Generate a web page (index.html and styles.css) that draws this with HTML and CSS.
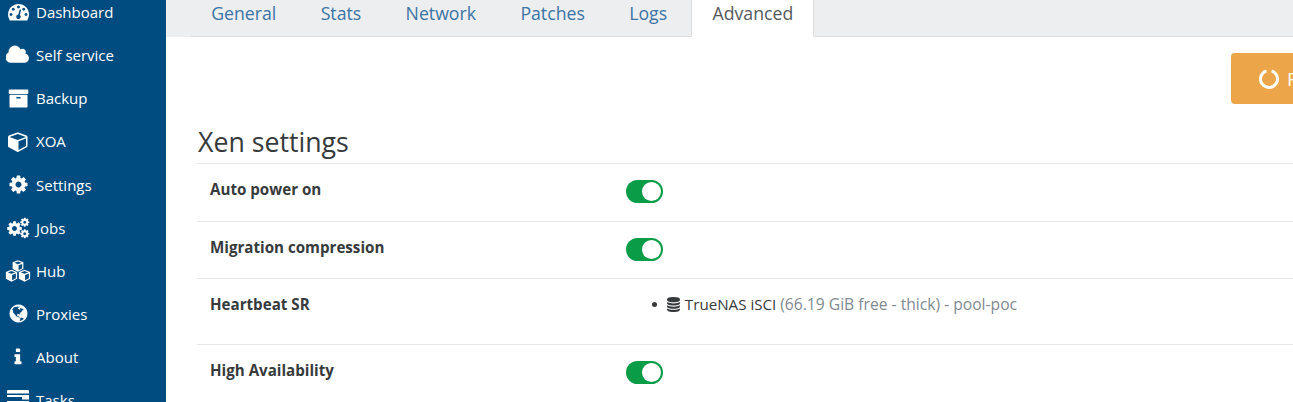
FILE: index.html
```html
<!doctype html>
<html lang="en">
    <head>
        <meta charset="UTF-8" />
        <title>Xen Orchestra - Advanced</title>
        <link rel="stylesheet" href="styles.css">
    </head>
    <body>
        <svg class="sprites" width="0" height="0">
            <symbol id="i-cog" viewBox="0 0 1792 1792"><path d="M1152 896q0-106-75-181t-181-75-181 75-75 181 75 181 181 75 181-75 75-181zm512-109v222q0 12-8 23t-20 13l-185 28q-19 54-39 91 35 50 107 138 10 12 10 25t-9 23q-27 37-99 108t-94 71q-12 0-26-9l-138-108q-44 23-91 38-16 136-29 186-7 28-36 28h-222q-14 0-24.5-8.5t-11.5-21.5l-28-184q-49-16-90-37l-141 107q-10 9-25 9-14 0-25-11-126-114-165-168-7-10-7-23 0-12 8-23 15-21 51-66.5t54-70.5q-27-50-41-99l-183-27q-13-2-21-12.5t-8-23.5v-222q0-12 8-23t19-13l186-28q14-46 39-92-40-57-107-138-10-12-10-24 0-10 9-23 26-36 98.5-107.5t94.5-71.5q13 0 26 10l138 107q44-23 91-38 16-136 29-186 7-28 36-28h222q14 0 24.5 8.5t11.5 21.5l28 184q49 16 90 37l142-107q9-9 24-9 13 0 25 10 129 119 165 170 7 8 7 22 0 12-8 23-15 21-51 66.5t-54 70.5q26 50 41 98l183 28q13 2 21 12.5t8 23.5z"/></symbol>
            <symbol id="i-cube" viewBox="0 0 1792 1792"><path d="M896 1629l640-349v-636l-640 233v752zm-64-865l698-254-698-254-698 254zm832-252v768q0 35-18 65t-49 47l-704 384q-28 16-61 16t-61-16l-704-384q-31-17-49-47t-18-65v-768q0-40 23-73t61-47l704-256q22-8 44-8t44 8l704 256q38 14 61 47t23 73z"/></symbol>
            <symbol id="i-block" viewBox="0 0 20 20"><path d="M10 .5l9 3.300v10.900L10 19.500 1 14.700V3.800zM10 2.500L4 4.700l6 2.200 6-2.200zM11 8.700v8.500l6-3.300V6.500z" fill-rule="evenodd"/></symbol>
        </svg>

        <nav class="sidebar">
            <a class="nav-item"><span class="nav-icon"><svg width="21" height="21" viewBox="0 0 1792 1792"><path d="M384 1152q0-53-37.5-90.5t-90.5-37.5-90.5 37.5-37.5 90.5 37.5 90.5 90.5 37.5 90.5-37.5 37.5-90.5zm192-448q0-53-37.5-90.5t-90.5-37.5-90.5 37.5-37.5 90.5 37.5 90.5 90.5 37.5 90.5-37.5 37.5-90.5zm428 481l101-382q6-26-7.5-48.5t-38.5-29.5-48 6.5-30 39.5l-101 382q-60 5-107 43.5t-63 98.5q-20 77 20 146t117 89 146-20 89-117q16-60-6-117t-72-91zm660-33q0-53-37.5-90.5t-90.5-37.5-90.5 37.5-37.5 90.5 37.5 90.5 90.5 37.5 90.5-37.5 37.5-90.5zm-640-640q0-53-37.5-90.5t-90.5-37.5-90.5 37.5-37.5 90.5 37.5 90.5 90.5 37.5 90.5-37.5 37.5-90.5zm448 192q0-53-37.5-90.5t-90.5-37.5-90.5 37.5-37.5 90.5 37.5 90.5 90.5 37.5 90.5-37.5 37.5-90.5zm320 448q0 261-141 483-19 29-54 29h-1402q-35 0-54-29-141-221-141-483 0-182 71-348t191-286 286-191 348-71 348 71 286 191 191 286 71 348z"/></svg></span>Dashboard</a>
            <a class="nav-item"><span class="nav-icon"><svg width="24" height="22" viewBox="0 0 1920 1792"><path d="M1856 1152q0 159-112.5 271.5t-271.5 112.5h-1088q-185 0-316.5-131.5t-131.5-316.5q0-132 71-241.5t187-163.5q-2-28-2-43 0-212 150-362t362-150q158 0 286.5 88t187.5 230q70-62 166-62 106 0 181 75t75 181q0 75-41 138 129 30 213 134.5t84 239.5z"/></svg></span>Self service</a>
            <a class="nav-item"><span class="nav-icon"><svg width="21" height="21" viewBox="0 0 1792 1792"><path d="M1088 832q0-26-19-45t-45-19h-256q-26 0-45 19t-19 45 19 45 45 19h256q26 0 45-19t19-45zm576-192v960q0 26-19 45t-45 19h-1408q-26 0-45-19t-19-45v-960q0-26 19-45t45-19h1408q26 0 45 19t19 45zm64-448v256q0 26-19 45t-45 19h-1536q-26 0-45-19t-19-45v-256q0-26 19-45t45-19h1536q26 0 45 19t19 45z"/></svg></span>Backup</a>
            <a class="nav-item"><span class="nav-icon"><svg width="21" height="21"><use href="#i-cube"/></svg></span>XOA</a>
            <a class="nav-item"><span class="nav-icon"><svg width="21" height="21"><use href="#i-cog"/></svg></span>Settings</a>
            <a class="nav-item"><span class="nav-icon"><svg width="24" height="22" viewBox="0 0 24 22"><use href="#i-cog" x="0" y="3" width="17" height="17"/><use href="#i-cog" x="13.500" y="0" width="10.500" height="10.500"/><use href="#i-cog" x="13.500" y="11.500" width="10.500" height="10.500"/></svg></span>Jobs</a>
            <a class="nav-item"><span class="nav-icon"><svg width="26" height="22" viewBox="0 0 26 22"><use href="#i-block" x="6.500" y="0" width="13" height="12"/><use href="#i-block" x="0" y="9.500" width="13" height="12.500"/><use href="#i-block" x="13" y="9.500" width="13" height="12.500"/></svg></span>Hub</a>
            <a class="nav-item"><span class="nav-icon"><svg width="21" height="21" viewBox="0 0 1792 1792"><path d="M896 128q209 0 385.5 103t279.5 279.5 103 385.5-103 385.5-279.5 279.5-385.5 103-385.5-103-279.5-279.5-103-385.5 103-385.5 279.5-279.5 385.5-103zm274 521q-2 1-9.5 9.5t-13.5 9.5q2 0 4.500-5t5-11 3.500-7q6-7 22-15 14-6 52-12 34-8 51 11-2-2 9.500-13t14.500-12q3-2 15-4.500t15-7.500l2-22q-12 1-17.500-7t-6.500-21q0 2-6 8 0-7-4.500-8t-11.500 1-9 1q-10-3-15-7.500t-8-16.500-4-15q-2-5-9.500-11t-9.500-10q-1-2-2.500-5.500t-3-6.500-4-5.500-5.500-2.500-7 5-7.500 10-4.500 5q-3-2-6-1.500t-4.500 1-4.500 3-5 3.500q-3 2-8.500 3t-8.500 2q15-5-1-11-10-4-16-3 9-4 7.500-12t-8.500-14h5q-1-4-8.500-8.500t-17.500-8.500-13-6q-8-5-34-9.500t-33-.5q-5 6-4.500 10.500t4 14 3.500 12.500q1 6-5.500 13t-6.500 12q0 7 14 15.500t10 21.500q-3 8-16 16t-16 12q-5 8-1.500 18.500t10.500 16.500q2 2 1.500 4t-3.500 4.500-5.500 4-6.500 3.500l-3 2q-11 5-20.500-6t-13.500-26q-7-25-16-30-23-8-29 1-5-13-41-26-25-9-58-4 6-1 0-15-7-15-19-12 3-6 4-17.500t1-13.500q3-13 12-23 1-1 7-8.500t9.500-13.500.5-6q35 4 50-11 5-5 11.500-17t10.500-17q9-6 14-5.500t14.500 5.500 14.500 5q14 1 15.500-11t-7.500-20q12 1 3-17-4-7-8-9-12-4-27 5-8 4 2 8-1-1-9.500 10.500t-16.500 17.500-16-5q-1-1-5.500-13.500t-9.500-13.500q-8 0-16 15 3-8-11-15t-24-8q19-12-8-27-7-4-20.500-5t-19.500 4q-5 7-5.500 11.500t5 8 10.500 5.500 11.500 4 8.500 3q14 10 8 14-2 1-8.500 3.500t-11.500 4.500-6 4q-3 4 0 14t-2 14q-5-5-9-17.500t-7-16.500q7 9-25 6l-10-1q-4 0-16 2t-20.500 1-13.500-8q-4-8 0-20 1-4 4-2-4-3-11-9.500t-10-8.500q-46 15-94 41 6 1 12-1 5-2 13-6.500t10-5.500q34-14 42-7l5-5q14 16 20 25-7-4-30-1-20 6-22 12 7 12 5 18-4-3-11.500-10t-14.500-11-15-5q-16 0-22 1-146 80-235 222 7 7 12 8 4 1 5 9t2.500 11 11.500-3q9 8 3 19 1-1 44 27 19 17 21 21 3 11-10 18-1-2-9-9t-9-4q-3 5 .5 18.500t10.500 12.500q-7 0-9.500 16t-2.500 35.500-1 23.500l2 1q-3 12 5.500 34.500t21.500 19.500q-13 3 20 43 6 8 8 9 3 2 12 7.500t15 10 10 10.500q4 5 10 22.500t14 23.500q-2 6 9.500 20t10.500 23q-1 0-2.500 1t-2.500 1q3 7 15.500 14t15.500 13q1 3 2 10t3 11 8 2q2-20-24-62-15-25-17-29-3-5-5.500-15.500t-4.500-14.500q2 0 6 1.500t8.500 3.500 7.500 4 2 3q-3 7 2 17.500t12 18.500 17 19 12 13q6 6 14 19.500t0 13.500q9 0 20 10.500t17 19.500q5 8 8 26t5 24q2 7 8.500 13.500t12.500 9.500l16 8 13 7q5 2 18.500 10.500t21.500 11.500q10 4 16 4t14.500-2.500 13.500-3.500q15-2 29 15t21 21q36 19 55 11-2 1 .5 7.500t8 15.500 9 14.500 5.500 8.500q5 6 18 15t18 15q6-4 7-9-3 8 7 20t18 10q14-3 14-32-31 15-49-18 0-1-2.500-5.500t-4-8.500-2.500-8.500 0-7.500 5-3q9 0 10-3.500t-2-12.500-4-13q-1-8-11-20t-12-15q-5 9-16 8t-16-9q0 1-1.500 5.500t-1.500 6.500q-13 0-15-1 1-3 2.500-17.500t3.500-22.500q1-4 5.500-12t7.500-14.500 4-12.500-4.500-9.500-17.500-2.500q-19 1-26 20-1 3-3 10.500t-5 11.500-9 7q-7 3-24 2t-24-5q-13-8-22.500-29t-9.500-37q0-10 2.500-26.500t3-25-5.500-24.500q3-2 9-9.500t10-10.500q2-1 4.500-1.500t4.500 0 4-1.500 3-6q-1-1-4-3-3-3-4-3 7 3 28.500-1.500t27.500 1.500q15 11 22-2 0-1-2.500-9.500t-.5-13.500q5 27 29 9 3 3 15.500 5t17.500 5q3 2 7 5.500t5.500 4.500 5-.5 8.500-6.500q10 14 12 24 11 40 19 44 7 3 11 2t4.500-9.500 0-14-1.500-12.500l-1-8v-18l-1-8q-15-3-18.500-12t1.500-18.500 15-18.500q1-1 8-3.500t15.500-6.500 12.500-8q21-19 15-35 7 0 11-9-1 0-5-3t-7.500-5-4.500-2q9-5 2-16 5-3 7.500-11t7.500-10q9 12 21 2 8-8 1-16 5-7 20.500-10.500t18.500-9.500q7 2 8-2t1-12 3-12q4-5 15-9t13-5l17-11q3-4 0-4 18 2 31-11 10-11-6-20 3-6-3-9.500t-15-5.500q3-1 11.500-.5t10.500-.5q15-10-7-16-17-5-43 12zm-163 877q206-36 351-189-3-3-12.500-4.500t-12.500-3.500q-18-7-24-8 1-7-2.500-13t-8-9-12.500-8-11-7q-2-2-7-6t-7-5.500-7.500-4.500-8.500-2-10 1l-3 1q-3 1-5.500 2.500t-5.500 3-4 3 0 2.500q-21-17-36-22-5-1-11-5.500t-10.500-7-10-1.500-11.500 7q-5 5-6 15t-2 13q-7-5 0-17.500t2-18.500q-3-6-10.500-4.500t-12 4.500-11.500 8.500-9 6.500-8.500 5.500-8.500 7.500q-3 4-6 12t-5 11q-2-4-11.500-6.500t-9.500-5.500q2 10 4 35t5 38q7 31-12 48-27 25-29 40-4 22 12 26 0 7-8 20.500t-7 21.500q0 6 2 16z"/></svg></span>Proxies</a>
            <a class="nav-item"><span class="nav-icon"><svg width="20" height="20" viewBox="0 0 1792 1792"><path d="M1216 1344v128q0 26-19 45t-45 19h-512q-26 0-45-19t-19-45v-128q0-26 19-45t45-19h64v-384h-64q-26 0-45-19t-19-45v-128q0-26 19-45t45-19h384q26 0 45 19t19 45v576h64q26 0 45 19t19 45zm-128-1152v192q0 26-19 45t-45 19h-256q-26 0-45-19t-19-45v-192q0-26 19-45t45-19h256q26 0 45 19t19 45z"/></svg></span>About</a>
            <a class="nav-item"><span class="nav-icon"><svg width="22" height="20" viewBox="0 0 22 20"><path d="M1 0h20a1 1 0 0 1 1 1v2.500H0V1a1 1 0 0 1 1-1zM0 5h22v4.500H15V7H0zM0 11h22v3H0zM0 16h22v3H0z"/></svg></span>Tasks</a>
        </nav>

        <main class="content">
            <div class="tab-bar">
                <ul class="tabs">
                    <li class="tab">General</li>
                    <li class="tab">Stats</li>
                    <li class="tab">Network</li>
                    <li class="tab">Patches</li>
                    <li class="tab">Logs</li>
                    <li class="tab active">Advanced</li>
                </ul>
            </div>

            <div class="panel">
                <div class="toolbar">
                    <button class="btn-warning">
                        <svg width="20" height="20" viewBox="0 0 20 20"><path d="M12.600 1.900a8.500 8.500 0 1 1-5.200 0" fill="none" stroke="#fff" stroke-width="3"/></svg>
                        Reboot
                    </button>
                </div>

                <h3 class="section-title">Xen settings</h3>

                <div class="settings">
                    <div class="row">
                        <div class="label">Auto power on</div>
                        <div class="value"><span class="toggle"></span></div>
                    </div>
                    <div class="row">
                        <div class="label">Migration compression</div>
                        <div class="value"><span class="toggle"></span></div>
                    </div>
                    <div class="row">
                        <div class="label">Heartbeat SR</div>
                        <div class="value">
                            <ul class="sr-list">
                                <li>
                                    <svg class="db-icon" width="15" height="15" viewBox="0 0 1792 1792"><path d="M896 768q237 0 443-43t325-127v170q0 69-103 128t-280 93.500-385 34.500-385-34.500-280-93.500-103-128v-170q119 84 325 127t443 43zm0 768q237 0 443-43t325-127v170q0 69-103 128t-280 93.500-385 34.500-385-34.500-280-93.500-103-128v-170q119 84 325 127t443 43zm0-384q237 0 443-43t325-127v170q0 69-103 128t-280 93.500-385 34.500-385-34.500-280-93.500-103-128v-170q119 84 325 127t443 43zm0-1152q208 0 385 34.500t280 93.500 103 128v128q0 69-103 128t-280 93.500-385 34.500-385-34.500-280-93.500-103-128v-128q0-69 103-128t280-93.500 385-34.500z"/></svg>
                                    TrueNAS iSCI <span class="muted">(66.19 GiB free - thick) - pool-poc</span>
                                </li>
                            </ul>
                        </div>
                    </div>
                    <div class="row">
                        <div class="label">High Availability</div>
                        <div class="value"><span class="toggle"></span></div>
                    </div>
                </div>
            </div>
        </main>
    </body>
</html>
```

FILE: styles.css
```css
* {
    box-sizing: border-box;
}
html,
body {
    height: 100%;
}
body {
    display: flex;
    margin: 0;
    overflow: hidden;
    background: #fff;
    color: #373a3c;
    font-family: "Open Sans", "Noto Sans", sans-serif;
    font-size: 15px;
}
.sprites {
    display: none;
}

/* sidebar, page is scrolled a little so first row is cut off */
.sidebar {
    flex: 0 0 166px;
    height: 100%;
    overflow: hidden;
    background: #004b7f;
    color: #fff;
}
.nav-item {
    display: flex;
    align-items: center;
    height: 43.15px;
}
.nav-item:first-child {
    margin-top: -9.6px;
}
.nav-icon {
    display: flex;
    flex: 0 0 36px;
    justify-content: center;
}
.nav-icon svg {
    fill: #fff;
}

.content {
    flex: 1;
    min-width: 0;
    overflow: hidden;
}
.tab-bar {
    height: 37px;
    padding-left: 25px;
    background: #eceef0;
}
.tabs {
    display: flex;
    height: 37px;
    margin: 0;
    padding: 0;
    border-bottom: 1px solid #ddd;
    list-style: none;
}
.tab {
    height: 37px;
    margin-right: 4px;
    padding: 0 20.2px;
    color: #3b74a5;
    font-size: 17.7px;
    line-height: 27px;
}
.tab.active {
    background: #fff;
    border: 1px solid #ddd;
    border-top: 0;
    border-bottom-color: #fff;
    color: #55595c;
}

.panel {
    padding: 16px 0 0 31px;
}
.toolbar {
    display: flex;
    justify-content: flex-end;
    margin-right: -80px;
}
.btn-warning {
    display: flex;
    flex-shrink: 0;
    align-items: center;
    gap: 8px;
    width: 142px;
    height: 51px;
    padding: 0 28px;
    border: 0;
    border-radius: 4px;
    background: #eca649;
    color: #fff;
    font-family: inherit;
    font-size: 19px;
}
.btn-warning svg {
    flex-shrink: 0;
}
.section-title {
    margin: 20px 0 0;
    padding: 0 0 4px 1px;
    font-size: 26.7px;
    font-weight: 400;
    line-height: 35px;
}

.row {
    display: flex;
    padding: 15px 13px;
    border-top: 1px solid #e8e8e8;
}
.row:last-child {
    border-bottom: 1px solid #e8e8e8;
}
.label {
    flex: 0 0 416px;
    font-size: 15.15px;
    font-weight: 700;
    line-height: 20.4px;
}
.value {
    line-height: 21px;
}
.toggle {
    display: block;
    position: relative;
    width: 37px;
    height: 23px;
    margin: 1px 0 2.5px;
    border-radius: 12px;
    background: #0a9c47;
}
.toggle::after {
    content: "";
    position: absolute;
    top: 2px;
    right: 2px;
    width: 19px;
    height: 19px;
    border-radius: 50%;
    background: #fff;
}
.sr-list {
    margin: 0 0 14px;
    padding-left: 26px;
    list-style: none;
    font-size: 15.15px;
}
.sr-list li::before {
    content: "";
    display: inline-block;
    width: 5px;
    height: 5px;
    margin-right: 5px;
    border-radius: 50%;
    background: #373a3c;
    vertical-align: 3px;
}
.db-icon {
    vertical-align: -2px;
    fill: #373a3c;
}
.muted {
    color: #818a91;
    font-size: 15.65px;
}
```
